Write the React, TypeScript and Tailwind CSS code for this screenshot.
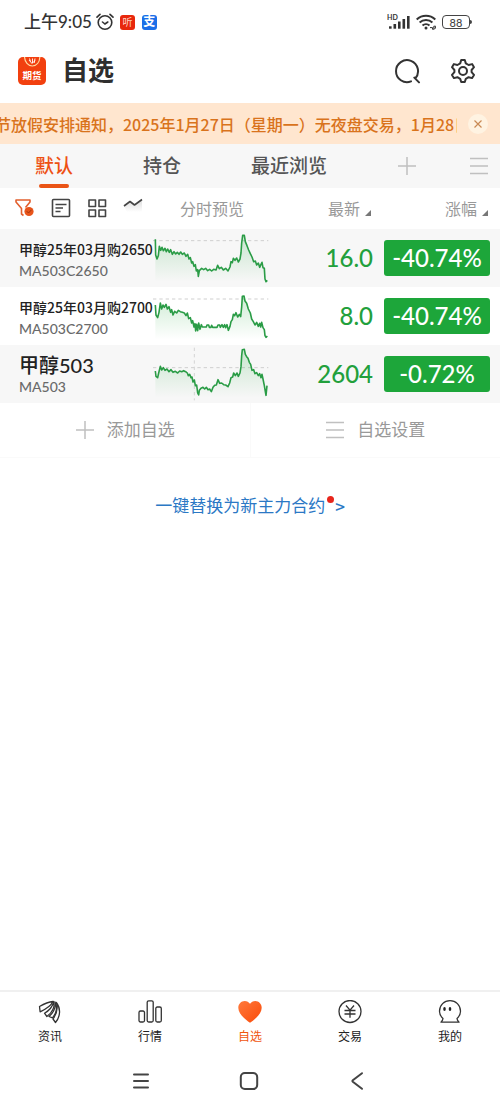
import type { ReactNode } from 'react';

type Quote = {
  name: string;
  long: boolean;
  code: string;
  last: string;
  change: string;
  top: number;
  base: number;
  cross?: number;
  line: string;
};

const quotes: Quote[] = [
  {
    name: '甲醇25年03月购2650',
    long: true,
    code: 'MA503C2650',
    last: '16.0',
    change: '-40.74%',
    top: 12,
    base: 47,
    line: '31,43 32,90 36,102 40,92 43,64 47,76 51,67 55,77 60,70 64,80 68,72 73,82 77,74 82,88 87,80 92,87 97,82 102,88 107,81 112,88 118,84 123,94 128,88 132,102 136,98 140,114 143,110 147,124 151,119 154,138 158,134 160,154 163,137 170,130 176,134 182,130 188,137 194,133 200,138 206,133 213,135 218,121 223,131 229,127 235,135 242,130 249,138 255,126 258,110 262,113 265,100 270,106 275,99 280,111 285,102 288,84 290,54 293,31 298,31 301,50 306,62 311,75 316,86 321,96 326,110 331,108 335,120 340,114 344,127 348,118 351,112 354,128 358,130 360,162 363,170 367,166',
  },
  {
    name: '甲醇25年03月购2700',
    long: true,
    code: 'MA503C2700',
    last: '8.0',
    change: '-40.74%',
    top: 186,
    base: 222,
    line: '31,240 33,270 38,278 42,262 46,234 50,252 54,240 58,247 63,238 67,252 72,245 77,262 80,254 84,270 89,259 95,264 100,256 106,260 112,262 118,264 123,272 127,264 131,281 136,278 140,294 143,287 147,306 150,296 152,318 155,298 158,317 161,294 165,313 169,299 172,306 184,306 186,300 191,300 193,307 198,307 200,301 203,307 216,307 219,300 224,300 226,307 231,299 235,307 239,299 242,308 246,299 250,316 255,304 258,290 262,284 265,268 269,272 273,263 278,276 283,268 287,275 290,246 292,214 297,213 300,228 305,235 310,252 316,264 320,282 325,290 330,300 335,292 340,304 344,295 347,306 350,292 354,308 358,314 360,332 363,337 367,333',
  },
  {
    name: '甲醇503',
    long: false,
    code: 'MA503',
    last: '2604',
    change: '-0.72%',
    top: 360,
    base: 428,
    cross: 148,
    line: '31,438 33,454 38,458 41,444 46,424 50,435 55,428 60,436 66,432 72,440 78,434 84,442 91,439 98,444 104,438 110,440 116,437 122,440 127,444 130,452 134,448 138,458 141,456 144,471 148,465 151,482 155,480 158,504 161,510 163,496 168,490 174,487 179,492 184,487 189,494 194,492 199,500 204,487 209,481 214,480 219,464 224,475 230,474 236,479 242,480 249,485 254,474 258,458 263,456 266,444 271,452 276,444 280,454 285,444 288,425 290,392 292,374 298,373 301,388 305,395 309,400 313,412 317,418 321,436 326,434 330,446 335,443 340,452 344,446 348,458 351,448 354,462 358,482 361,500 363,511 366,482',
  },
];

function Sparkline({ quote }: { quote: Quote }) {
  const { top, base, line, cross } = quote;
  const id = 'fill-' + quote.code;
  return (
    <svg className="block h-[58px] w-[120px]" viewBox={'24 ' + top + ' 360 174'} fill="none" aria-hidden="true">
      <defs>
        <linearGradient id={id} x1="0" y1="0" x2="0" y2="1">
          <stop offset="0" stopColor="#22a63c" stopOpacity="0.22" />
          <stop offset="1" stopColor="#22a63c" stopOpacity="0" />
        </linearGradient>
      </defs>
      <path d={'M24 ' + base + 'H370'} stroke="#cfcfcf" strokeWidth="3" strokeDasharray="10 9" />
      {cross && <path d={'M' + cross + ' ' + (top + 8) + 'V' + (top + 166)} stroke="#d4d4d4" strokeWidth="3" strokeDasharray="10 9" />}
      <polygon points={'31,' + (top + 158) + ' ' + line + ' 367,' + (top + 158)} fill={'url(#' + id + ')'} />
      <polyline points={line} stroke="#2a9c46" strokeWidth="4.8" strokeLinejoin="round" />
    </svg>
  );
}

function PlusIcon() {
  return (
    <svg className="size-5" viewBox="0 0 20 20" stroke="#c0c0c0" strokeWidth="1.5" aria-hidden="true">
      <path d="M10 1v18M1 10h18" />
    </svg>
  );
}

function LinesIcon() {
  return (
    <svg className="size-5" viewBox="0 0 20 20" stroke="#c0c0c0" strokeWidth="1.5" aria-hidden="true">
      <path d="M1 2.5h18M1 10h18M1 17.5h18" />
    </svg>
  );
}

function SortMark() {
  return (
    <svg className="mt-2 size-[6px]" viewBox="0 0 6 6" aria-hidden="true">
      <path d="M6 0v6H0z" fill="#777" />
    </svg>
  );
}

function StatusBar() {
  return (
    <div className="flex h-11 items-center justify-between pr-[28px] pl-6">
      <div className="flex items-center">
        <span className="text-[17px] font-medium text-[#333]">上午9:05</span>
        <svg className="ml-1 size-[18px]" viewBox="0 0 18 18" fill="none" stroke="#333" strokeWidth="1.6" strokeLinecap="round" aria-hidden="true">
          <circle cx="9" cy="9.5" r="6.8" />
          <path d="M1 4.200 4 1.300M17 4.200l-3-2.900M6.500 9l2.500 2 2.800-2" />
        </svg>
        <span className="ml-[6px] flex size-[15px] items-center justify-center rounded-[3px] bg-[#e8280c] text-[10px] leading-none text-[#ffd2c4]">听</span>
        <span className="ml-[7px] flex size-[15px] items-center justify-center rounded-[3px] bg-[#1b6fe8] text-[12px] leading-none font-bold text-white">支</span>
      </div>
      <div className="flex items-center gap-[6px]">
        <svg className="h-4 w-[23px]" viewBox="0 0 23 16" fill="#333" aria-hidden="true">
          <text x="0" y="6" fontSize="7" fontWeight="700" fontFamily="Lato, sans-serif">HD</text>
          <rect x="2" y="12.3" width="2.6" height="2.4" />
          <rect x="6.500" y="10" width="2.600" height="4.700" />
          <rect x="11" y="7.500" width="2.600" height="7.200" />
          <rect x="15.500" y="5" width="2.600" height="9.700" />
          <rect x="20" y="2" width="2.600" height="12.700" />
        </svg>
        <svg className="h-4 w-5" viewBox="0 0 20 16" fill="none" stroke="#333" strokeWidth="2" aria-hidden="true">
          <path d="M.7 5.4a13.6 13.6 0 0 1 18.6 0M3.6 8.5a9.4 9.4 0 0 1 12.8 0M6.5 11.5a5.2 5.2 0 0 1 7 0" />
          <circle cx="10" cy="14" r="1.5" fill="#333" stroke="none" />
          <path d="M14 13.6h2.5v2M17.8 16v-3.8h1.8v2h-1.5" strokeWidth="1" />
        </svg>
        <span className="flex items-center">
          <span className="flex h-[14px] w-7 items-center justify-center rounded-[4px] border border-[#444] text-[11px] leading-none font-medium text-[#444]">88</span>
          <span className="h-1 w-[2px] rounded-r bg-[#444]" />
        </span>
      </div>
    </div>
  );
}

function Header() {
  return (
    <header className="flex h-[59px] items-center pr-6 pb-[5px] pl-[18px]">
      <svg className="size-7" viewBox="0 0 28 28" aria-hidden="true">
        <rect width="28" height="28" rx="5" fill="#f2400f" />
        <path d="M6.5 0c.4 5.2 3.5 9 7.8 9s7.200-3.800 7.600-9" fill="none" stroke="#ffd9a0" strokeWidth="1.200" />
        <path d="M11 3l3 3.500 3-3M14.500 1.500v4.500M11.500 1.500l1 3M17 1.500l-.8 4.500" stroke="#fff" strokeWidth=".9" fill="none" />
        <text x="14" y="21.500" textAnchor="middle" fontSize="9.500" fontWeight="700" fill="#fff" fontFamily="'Noto Sans CJK SC', sans-serif">期货</text>
      </svg>
      <h1 className="ml-4 pb-[3px] text-[26px] leading-9 font-bold text-[#2e2e2e]">自选</h1>
      <button type="button" aria-label="搜索" className="ml-auto">
        <svg className="size-[26px]" viewBox="0 0 26 26" fill="none" stroke="#333" strokeWidth="2" strokeLinecap="round" aria-hidden="true">
          <path d="M16 23.400A11 11 0 1 1 20.200 20.500M19.300 19.600l4.700 4.800" />
        </svg>
      </button>
      <button type="button" aria-label="设置" className="ml-[29px]">
        <svg className="size-[26px]" viewBox="0 0 26 26" fill="none" stroke="#333" strokeWidth="2" strokeLinejoin="round" aria-hidden="true">
          <path d="M11.200 2h3.600l1 3.400 2.800 1.600 3.500-.9 1.900 3.100L21.600 12v2.200l2.400 2.700-1.900 3.200-3.500-.9-2.800 1.600-1 3.200h-3.600l-1-3.200-2.800-1.600-3.500.9L2 16.900l2.400-2.700V12L2 9.200l1.900-3.100 3.500.9 2.800-1.600z" />
          <circle cx="13" cy="13" r="4" />
        </svg>
      </button>
    </header>
  );
}

function ToolButton({ label, children }: { label: string; children: ReactNode }) {
  return (
    <button type="button" aria-label={label} className="size-5">
      <svg className="size-5" viewBox="0 0 20 20" fill="none" stroke="#444" strokeWidth="1.6" strokeLinejoin="round" aria-hidden="true">
        {children}
      </svg>
    </button>
  );
}

function QuoteTable() {
  return (
    <table className="w-full table-fixed border-collapse">
      <colgroup>
        <col className="w-[153px]" />
        <col className="w-[120px]" />
        <col />
        <col className="w-[116px]" />
      </colgroup>
      <thead>
        <tr className="h-[41px] text-[16px] text-[#999]">
          <th className="p-0 font-normal">
            <div className="flex gap-4 pb-[2px] pl-[15px]">
              <ToolButton label="筛选">
                <g stroke="#e2602f">
                  <path d="M8.500 17.500 6.500 16v-5.500L1 4V2h14v2l-4.500 5.500" />
                </g>
                <circle cx="14" cy="13.500" r="4.600" fill="#e8541a" stroke="none" />
                <path d="M11.800 13.200l1.700 1.800 3-3.200" stroke="#9e3510" strokeWidth="1" />
              </ToolButton>
              <ToolButton label="列表">
                <rect x="1.500" y="1.500" width="17" height="17" rx="1" />
                <path d="M4.500 6.500h11M4.500 10h7.500M4.500 13.500h5" />
              </ToolButton>
              <ToolButton label="宫格">
                <path d="M2 2h6.500v6.500H2zM12 2h6.500v6.500H12zM2 12h6.500v6.500H2zM12 12h6.500v6.500H12z" />
              </ToolButton>
              <ToolButton label="走势">
                <defs>
                  <linearGradient id="trend" x1="0" y1="0" x2="0" y2="1">
                    <stop offset="0" stopColor="#dcdcdc" />
                    <stop offset="1" stopColor="#ffffff" />
                  </linearGradient>
                </defs>
                <path d="M1 8l6-4.500 4.500 3.500L19 1.500V14H4z" fill="url(#trend)" stroke="none" />
                <path d="M1 8l6-4.500 4.500 3.500L19 1.500" />
              </ToolButton>
            </div>
          </th>
          <th className="p-0 pl-[27px] text-left font-normal">分时预览</th>
          <th className="p-0 font-normal">
            <button type="button" className="ml-auto flex items-center gap-[5px] pr-[13px]">
              最新
              <SortMark />
            </button>
          </th>
          <th className="p-0 font-normal">
            <button type="button" className="ml-auto flex items-center gap-[5px] pr-3">
              涨幅
              <SortMark />
            </button>
          </th>
        </tr>
      </thead>
      <tbody>
        {quotes.map((quote) => (
          <tr key={quote.code} className="h-[58px] odd:bg-[#f7f7f7]">
            <td className="p-0 pt-[2px] pl-[19px] align-middle whitespace-nowrap">
              <div
                className={
                  quote.long
                    ? "font-['Noto_Sans_CJK_SC',sans-serif] text-[14px] leading-6 font-medium text-[#222]"
                    : 'text-[20px] leading-6 font-medium text-[#222]'
                }
              >
                {quote.name}
              </div>
              <div className="text-[14px] leading-5 font-medium text-[#6a6a6a]">{quote.code}</div>
            </td>
            <td className="p-0">
              <Sparkline quote={quote} />
            </td>
            <td className="p-0 pr-[11px] text-right text-[24px] leading-8 font-medium text-[#22a03c]">{quote.last}</td>
            <td className="p-0 pr-[10px]">
              <div className="rounded-[3px] bg-[#1da63a] py-[2px] text-center text-[24px] leading-8 font-medium text-white">{quote.change}</div>
            </td>
          </tr>
        ))}
      </tbody>
    </table>
  );
}

function NavItem({ label, active, children }: { label: string; active?: boolean; children: ReactNode }) {
  return (
    <button type="button" className={active ? 'flex flex-1 flex-col items-center text-[#f0560f]' : 'flex flex-1 flex-col items-center text-[#222]'}>
      <svg className="size-6" viewBox="0 0 24 24" fill="none" stroke="#333" strokeWidth="1.300" strokeLinejoin="round" aria-hidden="true">
        {children}
      </svg>
      <span className="mt-[5px] text-[12px] leading-4">{label}</span>
    </button>
  );
}

function BottomNav() {
  return (
    <nav className="flex h-[61px] border-t-2 border-[#f0f0f0] pt-2">
      <NavItem label="资讯">
        <path d="M15 1.500C10 2 5 4.500 1.500 6.500l.6 5.300C6 10 12.500 7 15 1.500z" />
        <path d="M15.800 1.500C14.500 7 10.500 11 6.500 13.200l2.400 3.300C13.500 13 17 7.500 15.800 1.500z" />
        <path d="M17 2c1 6-1.500 10.500-6 14.500l3.500 1.300C18.500 13 19.500 7 17 2z" />
        <path d="M18.300 2.500c2 5.500.5 11-3.300 16.500l2.500 3.500c5-6 5.500-14 .8-20z" />
      </NavItem>
      <NavItem label="行情">
        <rect x="1" y="11" width="5.500" height="11" rx="1.500" />
        <rect x="9.200" y=".8" width="6" height="21.200" rx="1.500" />
        <rect x="17.800" y="7" width="5.500" height="15" rx="1.500" />
      </NavItem>
      <NavItem label="自选" active>
        <defs>
          <linearGradient id="heart" x1="0" y1="0" x2="1" y2="1">
            <stop offset="0" stopColor="#ff7a3c" />
            <stop offset="1" stopColor="#fa4a08" />
          </linearGradient>
        </defs>
        <path d="M12 22.800C7.500 19.500.3 14 .3 7.800.3 3.800 3.300 1 6.700 1c2.300 0 4.100 1.100 5.300 2.800C13.200 2.100 15 1 17.300 1c3.400 0 6.400 2.800 6.400 6.800C23.700 14 16.500 19.500 12 22.800z" fill="url(#heart)" stroke="none" />
      </NavItem>
      <NavItem label="交易">
        <circle cx="12" cy="11.500" r="11" />
        <path d="M8 5.500l4 4.700 4-4.700M12 10.200v7.500M6.500 10.500h11M6.500 14h11" />
      </NavItem>
      <NavItem label="我的">
        <path d="M5 18.500C2.800 16.600 1.500 14 1.500 11.300 1.500 5 6.200.7 12 .7s10.500 4.300 10.500 10.600c0 2.700-1.300 5.300-3.500 7.200.1 1.400.9 2.500 2 3.700H3c1.100-1.200 1.900-2.300 2-3.700z" />
        <ellipse cx="6.500" cy="9" rx="1.300" ry="2" fill="#222" stroke="none" />
        <ellipse cx="12" cy="9" rx="1.300" ry="2" fill="#222" stroke="none" />
      </NavItem>
    </nav>
  );
}

function SystemNav() {
  return (
    <div className="flex h-[60px] items-center justify-center gap-[88px] pr-[2px]">
      <button type="button" aria-label="最近任务">
        <svg className="size-5" viewBox="0 0 20 20" stroke="#444" strokeWidth="2" strokeLinecap="round" aria-hidden="true">
          <path d="M3 3.500h14M3 10h14M3 16.500h14" />
        </svg>
      </button>
      <button type="button" aria-label="主屏幕">
        <svg className="size-5" viewBox="0 0 20 20" fill="none" stroke="#444" strokeWidth="2" aria-hidden="true">
          <rect x="1.800" y="2" width="16.400" height="16" rx="4" />
        </svg>
      </button>
      <button type="button" aria-label="返回">
        <svg className="size-5" viewBox="0 0 20 20" fill="none" stroke="#444" strokeWidth="2" strokeLinecap="round" strokeLinejoin="round" aria-hidden="true">
          <path d="M15 2.200 5.800 9.300q-.8.700 0 1.400L15 17.800" />
        </svg>
      </button>
    </div>
  );
}

export default function App() {
  return (
    <div className="flex min-h-screen flex-col bg-white font-['Lato','Noto_Sans_CJK_SC',sans-serif]">
      <StatusBar />
      <Header />

      <div className="flex h-[41px] items-center bg-[#ffe6cf] pr-[12px]">
        <div className="min-w-0 flex-1 overflow-hidden">
          <p className="-ml-[5px] font-['Noto_Sans_CJK_SC',sans-serif] text-[16px] leading-6 font-medium whitespace-nowrap text-[#d9731c]">
            节放假安排通知，2025年1月27日（星期一）无夜盘交易，1月28日
          </p>
        </div>
        <button type="button" aria-label="关闭" className="ml-[11px] flex size-5 items-center justify-center rounded-full bg-[#fff3e2]">
          <svg className="size-2" viewBox="0 0 8 8" stroke="#c98a55" strokeWidth="1.200" aria-hidden="true">
            <path d="M.5.5l7 7M7.500.5l-7 7" />
          </svg>
        </button>
      </div>

      <div className="flex h-11 items-stretch bg-[#f7f7f7] pr-[11px] pl-[35px]">
        <div className="flex gap-[70px] text-[19px] font-medium text-[#555]">
          <button type="button" className="flex flex-col items-center justify-between text-[#ee5013]">
            <span className="pt-[8px] leading-7">默认</span>
            <span className="h-1 w-[30px] rounded-full bg-[#ea5416]" />
          </button>
          <button type="button" className="flex pt-[8px] leading-7">持仓</button>
          <button type="button" className="flex pt-[8px] leading-7">最近浏览</button>
        </div>
        <div className="ml-auto flex items-center gap-[52px]">
          <button type="button" aria-label="添加分组">
            <PlusIcon />
          </button>
          <button type="button" aria-label="分组管理">
            <LinesIcon />
          </button>
        </div>
      </div>

      <QuoteTable />

      <div className="flex h-[55px] items-center border-b border-[#fafafa] text-[17px] text-[#999]">
        <button type="button" className="flex h-full flex-1 items-center justify-center gap-3 border-r border-[#fafafa]">
          <PlusIcon />
          添加自选
        </button>
        <button type="button" className="flex h-full flex-1 items-center justify-center gap-3">
          <LinesIcon />
          自选设置
        </button>
      </div>

      <a href="#replace" className="mt-9 flex self-center text-[17px] leading-6 text-[#2b78c5]">
        一键替换为新主力合约
        <span className="mt-[2px] ml-[2px] size-[7px] rounded-full bg-[#e8261c]" />
        <span className="ml-px font-['Noto_Sans_CJK_SC',sans-serif] font-medium">&gt;</span>
      </a>

      <div className="mt-auto">
        <BottomNav />
        <SystemNav />
      </div>
    </div>
  );
}
